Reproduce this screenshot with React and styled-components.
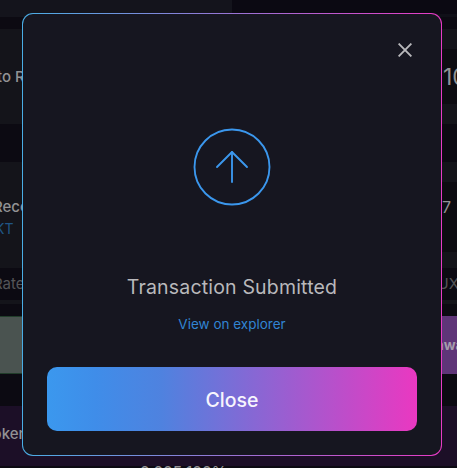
import styled, { createGlobalStyle } from "styled-components";

const App = () => {
  return (
    <>
      <GlobalStyle />
      <Screen>
        <Page>
          <Tabs>
            <ActiveTab />
          </Tabs>
          <Gap size={12} />
          <Panel height={95}>
            <Label offset={-3} top={39}>
              to R
            </Label>
            <Field top={20} height={55}>
              <Amount offset={2} size={23} top={15}>
                10
              </Amount>
            </Field>
          </Panel>
          <Gap size={38} />
          <Panel height={106}>
            <Label offset={-7} top={36}>
              Receive
              <Token>KT</Token>
            </Label>
            <Field top={20} height={70}>
              <Amount offset={1} size={16} top={15}>
                7
              </Amount>
            </Field>
          </Panel>
          <Rate>
            <span>Rate</span>
            <span>UX</span>
          </Rate>
          <Divider />
          <Gap size={12} />
          <Actions>
            <Approve />
            <Swap>nwap</Swap>
          </Actions>
          <Gap size={32} />
          <Footer>
            <span>Token</span>
          </Footer>
          <Balance>0.005 100%</Balance>
        </Page>
        <Overlay>
          <Modal>
            <Header>
              <CloseIcon aria-label="Close dialog">
                <svg width="14" height="14" viewBox="0 0 14 14">
                  <path d="M0.6 0.6 13.4 13.4M13.4 0.6 0.6 13.4" />
                </svg>
              </CloseIcon>
            </Header>
            <Confirmed>
              <svg width="90" height="90" viewBox="0 0 24 24">
                <circle cx="12" cy="12" r="10" />
                <polyline points="16 12 12 8 8 12" />
                <line x1="12" y1="16" x2="12" y2="8" />
              </svg>
            </Confirmed>
            <Title>Transaction Submitted</Title>
            <ExplorerLink>View on explorer</ExplorerLink>
            <CloseButton>Close</CloseButton>
          </Modal>
        </Overlay>
      </Screen>
    </>
  );
};

export default App;

// styling
const GlobalStyle = createGlobalStyle`
  * {
    box-sizing: border-box;
  }
  body {
    margin: 0;
    background: #0c0a12;
    font-family: Inter, "Liberation Sans", sans-serif;
  }
`;

const Screen = styled.div`
  position: relative;
  width: 457px;
  height: 468px;
  overflow: hidden;
`;

// the page behind the modal, already dimmed
const Page = styled.div`
  display: flex;
  flex-direction: column;
  height: 468px;
  white-space: nowrap;
  overflow: hidden;
`;

const Tabs = styled.div`
  height: 17px;
  flex-shrink: 0;
  background: linear-gradient(#0b0912 14px, #101018 14px);
`;

const ActiveTab = styled.div`
  width: 232px;
  height: 17px;
  background: #14141c;
`;

const Gap = styled.div`
  flex: 0 0 ${({ size }) => size}px;
`;

const Panel = styled.div`
  display: flex;
  justify-content: space-between;
  flex: 0 0 ${({ height }) => height}px;
  background: #14141a;
`;

const Label = styled.div`
  margin-left: ${({ offset }) => offset}px;
  padding-top: ${({ top }) => top}px;
  font-size: 15px;
  font-weight: 500;
  line-height: 18px;
  color: #929294;
`;

const Token = styled.div`
  margin-top: 4px;
  padding-left: 2px;
  font-size: 14px;
  font-weight: 400;
  line-height: 18px;
  color: #205685;
`;

const Field = styled.div`
  width: 217px;
  height: ${({ height }) => height}px;
  margin-top: ${({ top }) => top}px;
  padding-left: 201px;
  overflow: hidden;
  background: #0d0c11;
`;

const Amount = styled.div`
  padding-left: ${({ offset }) => offset}px;
  padding-top: ${({ top }) => top}px;
  font-size: ${({ size }) => size}px;
  line-height: ${({ size }) => size + 4}px;
  color: #929294;
`;

const Rate = styled.div`
  display: flex;
  justify-content: space-between;
  flex: 0 0 32px;
  margin: 0 -2px 0 -7px;
  font-size: 15px;
  line-height: 32px;
  color: #555558;
`;

const Divider = styled.div`
  flex: 0 0 4px;
  background: #14141a;
`;

const Actions = styled.div`
  display: flex;
  flex: 0 0 58px;
`;

const Approve = styled.div`
  width: 220px;
  border: 1px solid #213d2a;
  border-left: none;
  background: #4a5350;
`;

const Swap = styled.div`
  flex: 1;
  padding-left: 215px;
  overflow: hidden;
  background: #5f3578;
  color: #a59cab;
  font-size: 14px;
  font-weight: 700;
  line-height: 58px;
`;

const Footer = styled.div`
  flex: 0 0 60px;
  padding-top: 18px;
  background: #1c0f27;
  color: #929294;
  font-size: 15px;
  font-weight: 500;
  line-height: 20px;
  span {
    margin-left: -16px;
  }
`;

const Balance = styled.div`
  flex: 0 0 2px;
  padding-left: 140px;
  overflow: hidden;
  color: #929294;
  font-size: 15px;
  font-weight: 500;
  line-height: 11px;
`;

const Overlay = styled.div`
  position: absolute;
  inset: 0;
  padding: 13px 15px 12px 22px;
`;

const Modal = styled.div`
  display: flex;
  flex-direction: column;
  width: 420px;
  height: 443px;
  padding: 24px;
  border: 1px solid transparent;
  border-radius: 11px;
  background:
    linear-gradient(#161620, #161620) padding-box,
    linear-gradient(90deg, #4aaee5, #e83ac5) border-box;
`;

const Header = styled.div`
  display: flex;
  justify-content: flex-end;
  padding: 5px 5px 0 0;
`;

const CloseIcon = styled.button`
  display: flex;
  padding: 0;
  border: none;
  background: none;
  cursor: pointer;
  svg {
    stroke: #b9b9bc;
    stroke-width: 1.9;
  }
`;

const Confirmed = styled.div`
  display: flex;
  justify-content: center;
  margin-top: 65px;
  svg {
    fill: none;
    stroke: #3b97ed;
    stroke-width: 0.5;
    stroke-linecap: round;
    stroke-linejoin: round;
  }
`;

const Title = styled.div`
  margin-top: 63px;
  text-align: center;
  font-size: 19.5px;
  line-height: 24px;
  letter-spacing: 0.18px;
  color: #b9b9bc;
`;

const ExplorerLink = styled.a`
  margin-top: 16px;
  text-align: center;
  font-size: 13.5px;
  line-height: 18px;
  color: #3184d2;
`;

const CloseButton = styled.button`
  height: 64px;
  margin-top: auto;
  padding-top: 2px;
  border: none;
  border-radius: 10px;
  background: linear-gradient(90deg, #3b98ee 0%, #3f8de9 13%, #4f82df 31%, #ea38c1 100%);
  color: #f7f5fd;
  font-family: inherit;
  font-size: 19.5px;
  font-weight: 500;
  cursor: pointer;
`;
